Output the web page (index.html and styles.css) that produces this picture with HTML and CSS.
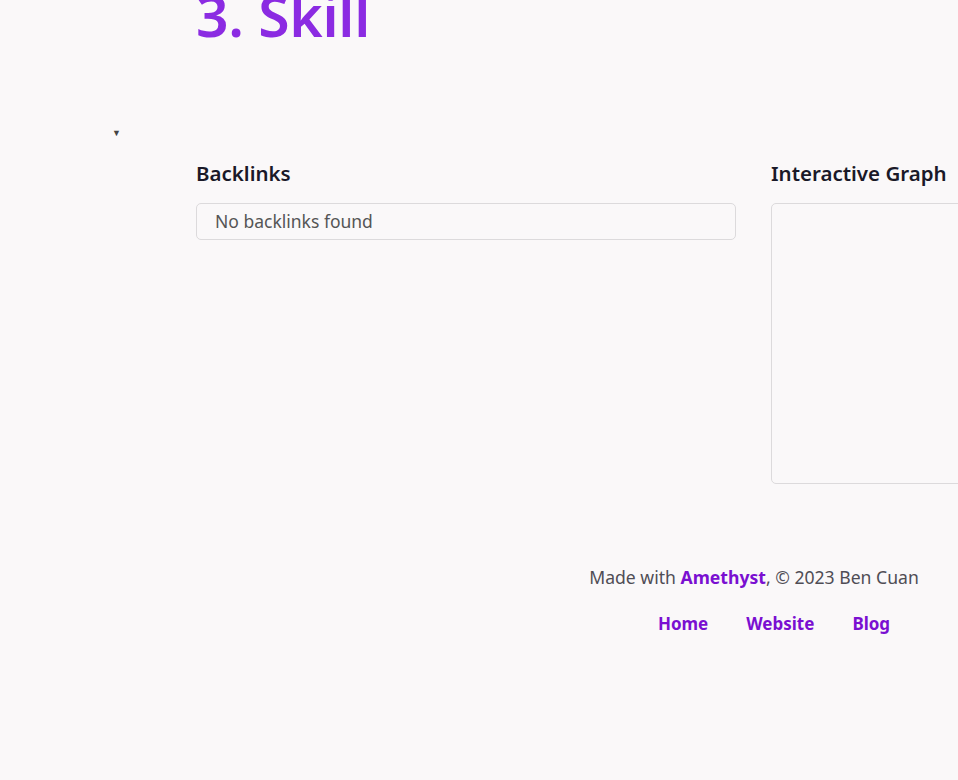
FILE: index.html
```html
<!DOCTYPE html>
<html lang="en">
<head>
<meta charset="utf-8">
<title>3. Skill</title>
<link rel="stylesheet" href="styles.css">
</head>
<body>
<div class="page">
  <header class="head">
    <h1 class="title">3. Skill</h1>
  </header>
  <div class="toc"><span class="marker">&#9660;</span></div>
  <section class="panels">
    <div class="panel">
      <h2 class="panel-title">Backlinks</h2>
      <div class="backlinks">No backlinks found</div>
    </div>
    <div class="panel">
      <h2 class="panel-title">Interactive Graph</h2>
      <div class="graph"></div>
    </div>
  </section>
  <footer class="footer">
    <p class="credit">Made with <a class="brand" href="#">Amethyst</a>, © 2023 Ben Cuan</p>
    <ul class="links">
      <li><a href="#">Home</a></li>
      <li><a href="#">Website</a></li>
      <li><a href="#">Blog</a></li>
    </ul>
  </footer>
</div>
</body>
</html>
```
FILE: styles.css
```css
html, body {
  margin: 0;
  padding: 0;
  background: #faf8f9;
  overflow: hidden;
}
body {
  font-family: "Noto Sans", "Open Sans", sans-serif;
  color: #1d1b2b;
  width: 958px;
  height: 780px;
}
.page {
  width: 1400px;
}
.head {
  padding-left: 196px;
}
.title {
  margin: -17px 0 0 0;
  font-size: 57px;
  line-height: 64px;
  font-weight: 600;
  color: #8b2be2;
  letter-spacing: -0.3px;
}
.toc {
  margin-top: 75px;
  padding-left: 112px;
  height: 16px;
  line-height: 16px;
}
.marker {
  font-size: 9px;
  color: #444;
}
.panels {
  display: flex;
  gap: 35px;
  padding-left: 196px;
  margin-top: 22px;
}
.panel {
  width: 540px;
  flex: none;
}
.panel-title {
  margin: 0 0 17px 0;
  font-size: 20.5px;
  line-height: 26px;
  font-weight: 600;
  color: #1a1928;
}
.backlinks {
  box-sizing: border-box;
  height: 37px;
  border: 1px solid #dcdadc;
  border-radius: 5px;
  padding: 0 18px;
  font-size: 17.5px;
  line-height: 35px;
  color: #555;
}
.graph {
  box-sizing: border-box;
  height: 281px;
  border: 1px solid #dcdadc;
  border-radius: 5px;
}
.footer {
  padding-left: 196px;
  width: 1116px;
  margin-top: 78px;
  text-align: center;
}
.credit {
  margin: 0;
  font-size: 17.6px;
  line-height: 30px;
  color: #4f4d55;
}
.credit a, .links a {
  color: #7a0fd1;
  font-weight: 700;
  text-decoration: none;
}
.links {
  list-style: none;
  margin: 17px 0 0 0;
  padding: 0 0 0 40px;
  display: flex;
  justify-content: center;
  gap: 38px;
  font-size: 17px;
  line-height: 30px;
}
```
